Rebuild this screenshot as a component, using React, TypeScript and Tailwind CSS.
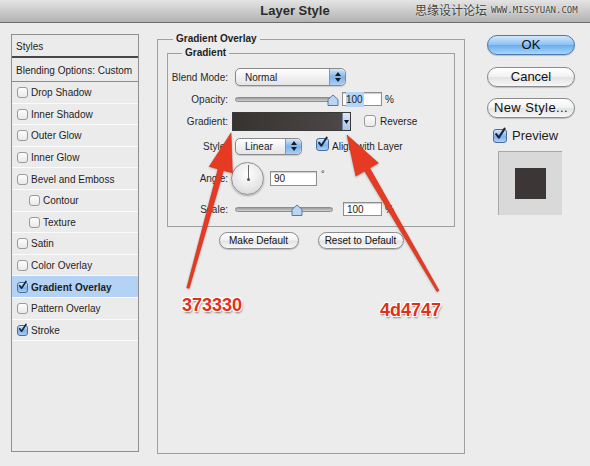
import React from 'react';

function Check({ checked, className = 'w-[11px] h-[11px]' }: { checked?: boolean; className?: string }) {
  return (
    <span
      className={`relative inline-block shrink-0 rounded-[3px] border ${className} ${
        checked
          ? 'border-[#4b6d98] bg-[linear-gradient(#d6e8fb,#7fb4ec_55%,#a9d0f7)]'
          : 'border-[#9a9a9a] bg-[linear-gradient(#fdfdfd,#e9e9e9)]'
      }`}
    >
      {checked && (
        <svg viewBox="0 0 12 12" className="absolute left-[0px] top-[-2px] w-full h-full overflow-visible">
          <path d="M2.2 6.2 L4.8 9.6 L10.6 0.6" fill="none" stroke="#16263a" strokeWidth="2.1" strokeLinecap="round" strokeLinejoin="round" />
        </svg>
      )}
    </span>
  );
}

function Stepper() {
  return (
    <span className="flex w-[16px] h-full flex-col items-center justify-center gap-[2px] rounded-r-[5px] border-l border-[#7f96b4] bg-[linear-gradient(#d6e7fa,#7eb2ea_50%,#a8cff6)]">
      <svg width="6" height="4" viewBox="0 0 6 4"><path d="M0 4 L3 0 L6 4 Z" fill="#1c1c1c" /></svg>
      <svg width="6" height="4" viewBox="0 0 6 4"><path d="M0 0 L3 4 L6 0 Z" fill="#1c1c1c" /></svg>
    </span>
  );
}

function Select({ value, className }: { value: string; className: string }) {
  return (
    <div className={`flex items-stretch overflow-hidden rounded-[5px] border border-[#8a8a8a] bg-[linear-gradient(#ffffff,#f1f1f1_50%,#e4e4e4)] shadow-[0_1px_1px_rgba(0,0,0,0.15)] ${className}`}>
      <span className="flex-1 pl-[9px] flex items-center text-[10px] text-[#1c1c1c]">{value}</span>
      <Stepper />
    </div>
  );
}

function Thumb() {
  return (
    <svg width="12" height="12" viewBox="0 0 12 12" className="absolute top-[-4px] -translate-x-1/2">
      <path d="M1 11.5 V5.5 L6 1 L11 5.5 V11.5 Z" fill="#bad5f2" stroke="#58799f" strokeWidth="1" strokeLinejoin="round" />
    </svg>
  );
}

function Slider({ pos }: { pos: number }) {
  return (
    <div className="relative w-[98px] h-[5px] rounded-full border border-[#8d8d8d] bg-[linear-gradient(#9b9b9b,#d0d0d0)]">
      <span className="absolute top-0 left-0" style={{ left: pos }}>
        <Thumb />
      </span>
    </div>
  );
}

function Field({ children, className }: { children: React.ReactNode; className: string }) {
  return (
    <div className={`flex items-center border border-[#8e8e8e] bg-white pl-[3px] text-[10px] shadow-[inset_0_1px_1px_rgba(0,0,0,0.2)] ${className}`}>
      {children}
    </div>
  );
}

function Label({ children }: { children: React.ReactNode }) {
  return <span className="w-[60px] shrink-0 text-right text-[10px] text-[#2a2a2a]">{children}</span>;
}

function Button({ children, className, primary }: { children: React.ReactNode; className: string; primary?: boolean }) {
  return (
    <div
      className={`flex items-center justify-center rounded-full border ${
        primary
          ? 'border-[#4f78ab] bg-[linear-gradient(#d3e8fc,#8cc2f4_48%,#6aaeef_52%,#a9d6fb)]'
          : 'border-[#8b8b8b] bg-[linear-gradient(#ffffff,#f2f2f2_48%,#e3e3e3_52%,#f7f7f7)]'
      } shadow-[0_1px_1px_rgba(0,0,0,0.2)] text-[#111] ${className}`}
    >
      {children}
    </div>
  );
}

const effects: { name: string; checked?: boolean; indent?: boolean; active?: boolean }[] = [
  { name: 'Drop Shadow' },
  { name: 'Inner Shadow' },
  { name: 'Outer Glow' },
  { name: 'Inner Glow' },
  { name: 'Bevel and Emboss' },
  { name: 'Contour', indent: true },
  { name: 'Texture', indent: true },
  { name: 'Satin' },
  { name: 'Color Overlay' },
  { name: 'Gradient Overlay', checked: true, active: true },
  { name: 'Pattern Overlay' },
  { name: 'Stroke', checked: true },
];

function StyleList() {
  return (
    <div className="mt-[11px] w-[128px] h-[418px] shrink-0 flex flex-col border border-[#8f8f8f] bg-[#ebebeb] text-[10px] text-[#1e1e1e]">
      <div className="h-[23px] shrink-0 flex items-center pl-[4px] pt-[1px] border-b-2 border-[#474747]">Styles</div>
      <div className="h-[24px] shrink-0 flex items-center pl-[4px] pt-[1px] border-b border-[#8c8c8c]">Blending Options: Custom</div>
      {effects.map((e) => (
        <div
          key={e.name}
          className={`h-[21.6px] shrink-0 flex items-center gap-[3px] pt-[1px] border-b border-[#fbfbfb] ${e.indent ? 'pl-[17px]' : 'pl-[5px]'} ${
            e.active ? 'bg-[#b3d2f5] font-bold' : ''
          }`}
        >
          <Check checked={e.checked} />
          <span>{e.name}</span>
        </div>
      ))}
    </div>
  );
}

function MainPanel() {
  return (
    <fieldset className="ml-[18px] mt-[10px] w-[307px] h-[421px] shrink-0 border border-[#a0a0a0] px-[9px]">
      <legend className="ml-[6px] px-[3px] text-[10px] leading-[12px] font-bold text-[#1e1e1e]">Gradient Overlay</legend>
      <fieldset className="mt-[2px] w-[288px] border border-[#a0a0a0] pt-[9px] pb-[9px]">
        <legend className="ml-[14px] px-[3px] text-[10px] leading-[12px] font-bold text-[#1e1e1e]">Gradient</legend>

        <div className="h-[18px] flex items-center">
          <Label>Blend Mode:</Label>
          <Select value="Normal" className="ml-[7px] w-[111px] h-[18px]" />
        </div>

        <div className="mt-[4px] h-[18px] flex items-center">
          <Label>Opacity:</Label>
          <div className="ml-[7px]">
            <Slider pos={97} />
          </div>
          <Field className="ml-[9px] w-[40px] h-[14px]">
            <span className="bg-[#b3d3f7] pr-[1px]">100</span>
          </Field>
          <span className="ml-[3px] text-[10px]">%</span>
        </div>

        <div className="mt-[4px] h-[19px] flex items-center">
          <Label>Gradient:</Label>
          <div className="ml-[4px] flex h-[19px] border border-[#3a3a3a]">
            <span className="w-[109px] bg-[linear-gradient(to_right,#373330,#4d4747)]" />
            <span className="w-[8px] flex items-center justify-center bg-[linear-gradient(#dbe7f6,#a9c4e6)] border-l border-[#6f86a6]">
              <svg width="5" height="4" viewBox="0 0 5 4"><path d="M0 0 L2.5 4 L5 0 Z" fill="#111" /></svg>
            </span>
          </div>
          <span className="ml-[13px]">
            <Check className="w-[12px] h-[12px]" />
          </span>
          <span className="ml-[4px] text-[10px]">Reverse</span>
        </div>

        <div className="mt-[6px] h-[18px] flex items-center">
          <Label>Style:</Label>
          <Select value="Linear" className="ml-[7px] w-[67px] h-[17px]" />
          <span className="ml-[14px]">
            <Check checked className="w-[13px] h-[13px]" />
          </span>
          <span className="ml-[3px] text-[10px]">Align with Layer</span>
        </div>

        <div className="mt-[6px] h-[35px] flex items-center">
          <Label>Angle:</Label>
          <div className="relative ml-[3px] w-[33px] h-[33px] rounded-full border border-[#8f8f8f] bg-[radial-gradient(circle_at_50%_35%,#ffffff,#e6e6e6_60%,#cfcfcf)] shadow-[0_1px_2px_rgba(0,0,0,0.3)]">
            <span className="absolute left-[15.5px] top-[2px] w-[1px] h-[14px] bg-[#6a6a6a]" />
            <span className="absolute left-[14.5px] top-[14.5px] w-[3px] h-[3px] rounded-full bg-[#555]" />
          </div>
          <Field className="ml-[6px] w-[47px] h-[15px]">90</Field>
          <span className="ml-[4px] self-start mt-[7px] text-[9px]">°</span>
        </div>

        <div className="mt-[5px] h-[16px] flex items-center">
          <Label>Scale:</Label>
          <div className="ml-[7px]">
            <Slider pos={61} />
          </div>
          <Field className="ml-[10px] w-[39px] h-[14px]">100</Field>
          <span className="ml-[3px] text-[10px]">%</span>
        </div>
      </fieldset>

      <div className="mt-[5px] flex justify-center gap-[19px] text-[10px]">
        <Button className="w-[80px] h-[17px]">Make Default</Button>
        <Button className="w-[86px] h-[17px]">Reset to Default</Button>
      </div>
    </fieldset>
  );
}

function RightColumn() {
  return (
    <div className="ml-[22px] mt-[12px] w-[88px] shrink-0 flex flex-col text-[13px]">
      <Button primary className="h-[20px]">OK</Button>
      <Button className="mt-[12px] h-[20px]">Cancel</Button>
      <Button className="mt-[11px] h-[20px] tracking-[0.4px]">New Style...</Button>
      <div className="mt-[10px] h-[15px] flex items-center pl-[6px]">
        <Check checked className="w-[14px] h-[14px]" />
        <span className="ml-[5px]">Preview</span>
      </div>
      <div className="mt-[8px] ml-[11px] w-[64px] h-[64px] flex items-center justify-center bg-[#d9d9d9] border-t border-l border-[#a8a8a8]">
        <span className="w-[31px] h-[31px] bg-[#3d3636]" />
      </div>
    </div>
  );
}

function Arrow({ tail, tip, head, half, width }: { tail: [number, number]; tip: [number, number]; head: number; half: number; width: number }) {
  const dx = tip[0] - tail[0];
  const dy = tip[1] - tail[1];
  const len = Math.hypot(dx, dy);
  const ux = dx / len;
  const uy = dy / len;
  const nx = -uy;
  const ny = ux;
  const bx = tip[0] - ux * head;
  const by = tip[1] - uy * head;
  const pts = [
    [tail[0] + nx * 1.2, tail[1] + ny * 1.2],
    [bx + nx * width, by + ny * width],
    [bx + nx * half, by + ny * half],
    tip,
    [bx - nx * half, by - ny * half],
    [bx - nx * width, by - ny * width],
    [tail[0] - nx * 1.2, tail[1] - ny * 1.2],
  ]
    .map((p) => `${p[0].toFixed(1)},${p[1].toFixed(1)}`)
    .join(' ');
  return <polygon points={pts} fill="#e63a22" stroke="#c92c17" strokeWidth="0.6" strokeLinejoin="round" />;
}

function Annotations() {
  return (
    <>
      <svg className="absolute inset-0 pointer-events-none" width="590" height="466">
        <g style={{ filter: 'drop-shadow(0 1px 1px rgba(0,0,0,0.25))' }}>
          <Arrow tail={[188, 288]} tip={[231, 133]} head={38} half={12} width={2.8} />
          <Arrow tail={[438, 291]} tip={[347, 135]} head={40} half={13} width={3} />
        </g>
      </svg>
      <span className="absolute left-[182px] top-[296px] text-[18px] leading-none font-bold text-[#e0301b] [text-shadow:0_0_1px_#fff,1px_0_0_#fff,-1px_0_0_#fff,0_1px_0_#fff,0_-1px_0_#fff,1px_1px_0_#fff,-1px_-1px_0_#fff,1px_-1px_0_#fff,-1px_1px_0_#fff,1px_2px_2px_rgba(0,0,0,0.5)]">
        373330
      </span>
      <span className="absolute left-[380px] top-[301px] text-[18px] leading-none font-bold text-[#e0301b] [text-shadow:0_0_1px_#fff,1px_0_0_#fff,-1px_0_0_#fff,0_1px_0_#fff,0_-1px_0_#fff,1px_1px_0_#fff,-1px_-1px_0_#fff,1px_-1px_0_#fff,-1px_1px_0_#fff,1px_2px_2px_rgba(0,0,0,0.5)]">
        4d4747
      </span>
    </>
  );
}

export default function App() {
  return (
    <div className="relative w-[590px] h-[466px] overflow-hidden bg-[#ececec] font-['Liberation_Sans',Arial,sans-serif] text-[#1e1e1e]">
      <div className="relative h-[23px] flex items-center justify-center border-b border-[#6e6e6e] bg-[linear-gradient(#e4e4e4,#b2b2b2)]">
        <span className="text-[13px] font-bold text-[#2b2b2b]">Layer Style</span>
        <span className="absolute left-[415px] top-[4px] flex items-center gap-[4px] text-[#3f3f3f]">
          <span className="text-[12px] leading-none font-['Noto_Sans_CJK_SC',sans-serif] [text-shadow:0_0_2px_#fff]">思缘设计论坛</span>
          <span className="text-[9px] leading-none font-['DejaVu_Sans_Mono',monospace] [text-shadow:0_0_2px_#fff]">WWW.MISSYUAN.COM</span>
        </span>
      </div>
      <div className="flex items-start pl-[11px]">
        <StyleList />
        <MainPanel />
        <RightColumn />
      </div>
      <Annotations />
    </div>
  );
}
